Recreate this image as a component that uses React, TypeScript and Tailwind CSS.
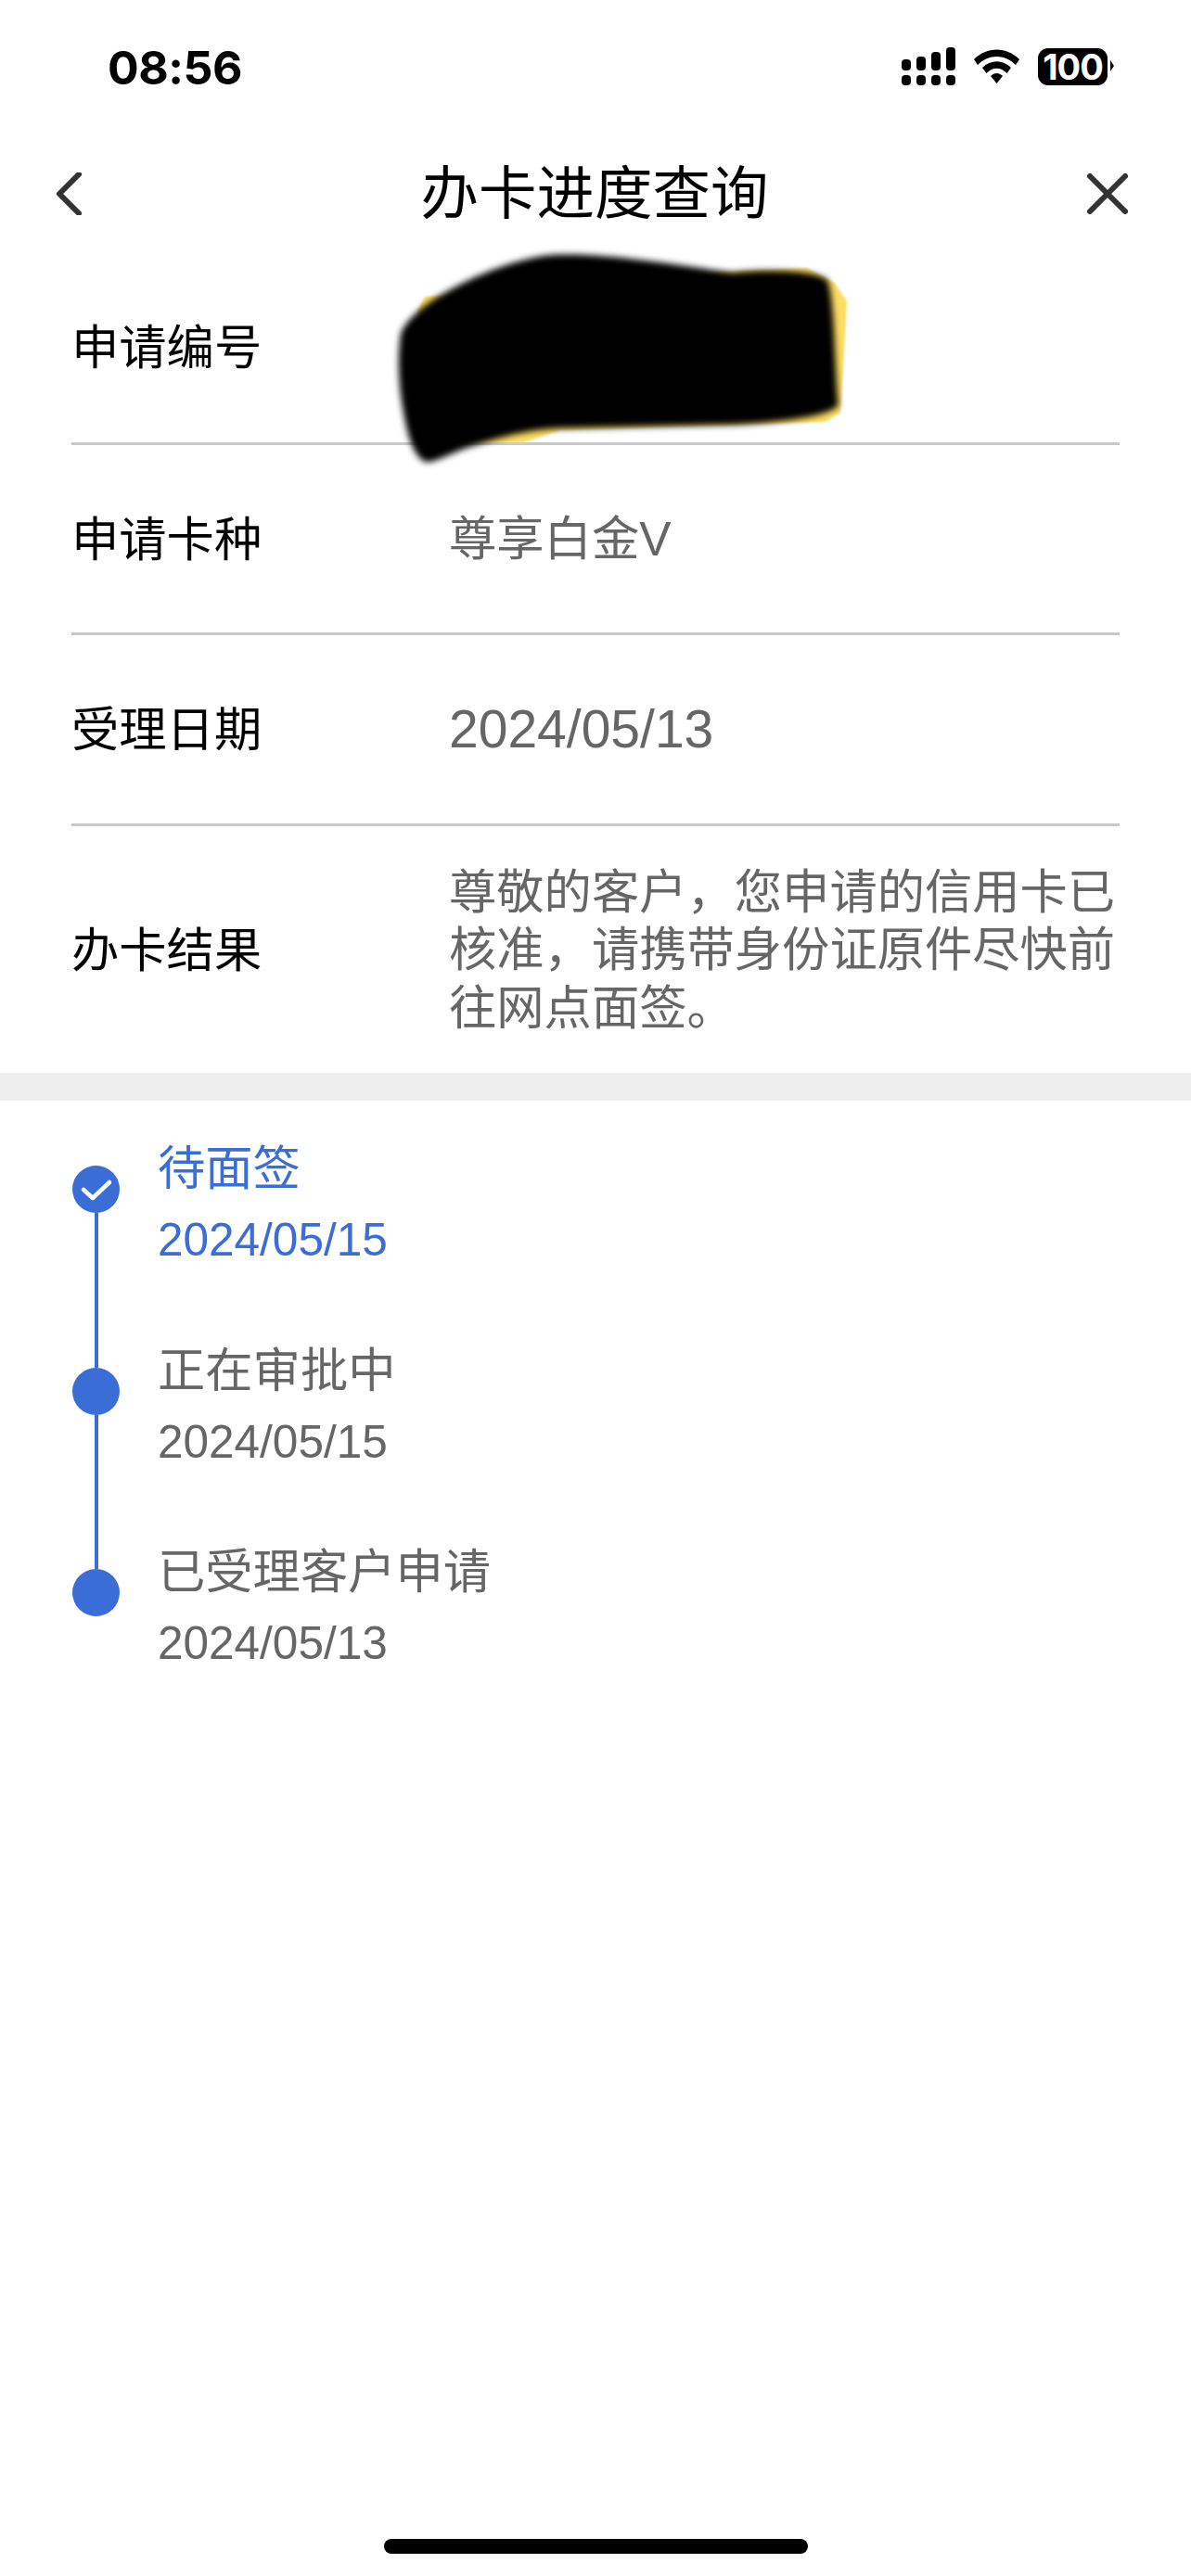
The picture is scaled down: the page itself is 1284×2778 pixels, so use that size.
const FONT = "font-['Liberation_Sans','Noto_Sans_CJK_SC',sans-serif]";

function StatusIcons() {
  return (
    <div className="flex items-center">
      <svg width="230" height="42" viewBox="0 0 230 42" className="block">
        <g fill="#000">
          <rect x="0" y="13" width="10" height="12" rx="4" />
          <rect x="16" y="10" width="10" height="15" rx="4" />
          <rect x="32" y="5" width="10" height="20" rx="4" />
          <rect x="48" y="0" width="10" height="25" rx="4" />
          <rect x="0" y="30" width="10" height="11" rx="4" />
          <rect x="16" y="30" width="10" height="11" rx="4" />
          <rect x="32" y="30" width="10" height="11" rx="4" />
          <rect x="48" y="30" width="10" height="11" rx="4" />
          <path d="M78 13 C92 -1 113 -1 127 13 L123 19 C111 7 94 7 82 19 Z" />
          <path d="M87 22 C96 13 109 13 118 22 L113.5 28 C107 21 98 21 91.500 28 Z" />
          <path d="M96 31 C100 27 105 27 109 31 L102.500 39 Z" />
          <path d="M225 14 L229 20 L225 26 Z" />
        </g>
      </svg>
    </div>
  );
}

function InfoRow({ label, value, h }: { label: string; value: React.ReactNode; h: string }) {
  return (
    <div className={`flex items-center mx-[77px] pt-[3px] ${h}`}>
      <div className="w-[407px] text-[51.300px] leading-[62px] text-black">{label}</div>
      <div className="flex-1 text-[51.300px] leading-[62.500px] text-[#666]">{value}</div>
    </div>
  );
}

function Step({ title, date, active, check, first, last, h }: { title: string; date: string; active?: boolean; check?: boolean; first?: boolean; last?: boolean; h: string }) {
  return (
    <div className={`flex ${h}`}>
      <div className="w-[51px] ml-[78px] flex flex-col items-center">
        <div className={first ? "h-[35px]" : "h-[35px] w-[4px] bg-[#3a6ed6]"} />
        <div className="w-[51px] h-[51px] rounded-full bg-[#3a6ed6] flex items-center justify-center shrink-0">
          {check && (
            <svg width="36" height="28" viewBox="0 0 36 28">
              <path d="M4 14 L14 23 L32 6" fill="none" stroke="#fff" strokeWidth="4.500" strokeLinecap="round" strokeLinejoin="round" />
            </svg>
          )}
        </div>
        {!last && <div className="flex-1 w-[4px] bg-[#3a6ed6]" />}
      </div>
      <div className={`ml-[41px] pt-[4px] ${active ? "text-[#3a6ed6]" : "text-[#666]"}`}>
        <div className="text-[51.300px] leading-[70px]">{title}</div>
        <div className="mt-[11px] text-[49.500px] leading-[60px]">{date}</div>
      </div>
    </div>
  );
}

export default function App() {
  return (
    <div className={`relative w-[1284px] h-[2778px] bg-white overflow-hidden flex flex-col ${FONT}`}>
      <div className="h-[144px] flex items-center justify-between pl-[116px] pr-[82px]">
        <span className="font-['Inter',sans-serif] font-bold text-[50px] tracking-[-0.500px] leading-none text-black mt-[2px]">08:56</span>
        <div className="relative flex items-center">
          <StatusIcons />
          <div className="absolute left-[147px] top-[1px] w-[75px] h-[40px] rounded-[11px] bg-black text-white font-['Inter',sans-serif] font-bold text-[38px] tracking-[-1px] leading-[40px] text-center">100</div>
        </div>
      </div>

      <div className="h-[128px] pt-[2px] flex items-center justify-between pl-[60px] pr-[68px]">
        <div className="w-[50px]">
          <svg width="28" height="46" viewBox="0 0 28 46">
            <path d="M25 2 L4 23 L25 44" fill="none" stroke="#333" strokeWidth="6" strokeLinecap="round" strokeLinejoin="round" />
          </svg>
        </div>
        <div className="text-[62.500px] leading-[80px] text-black">办卡进度查询</div>
        <svg width="44" height="44" viewBox="0 0 44 44">
          <path d="M3 3 L41 41 M41 3 L3 41" fill="none" stroke="#333" strokeWidth="6" strokeLinecap="round" />
        </svg>
      </div>

      <InfoRow label="申请编号" value="" h="h-[205px]" />
      <div className="mx-[77px] h-[3px] bg-[#c8c8c8]" />
      <InfoRow label="申请卡种" value="尊享白金V" h="h-[202px]" />
      <div className="mx-[77px] h-[3px] bg-[#c8c8c8]" />
      <InfoRow label="受理日期" value={<span className="text-[57px]">2024/05/13</span>} h="h-[203px]" />
      <div className="mx-[77px] h-[3px] bg-[#c8c8c8]" />
      <InfoRow
        label="办卡结果"
        value={<>尊敬的客户，您申请的信用卡已<br />核准，请携带身份证原件尽快前<br />往网点面签。</>}
        h="h-[266px]"
      />
      <div className="h-[30px] bg-[#eeeeee]" />

      <div className="pt-[35px]">
        <Step first check active title="待面签" date="2024/05/15" h="h-[218px]" />
        <Step title="正在审批中" date="2024/05/15" h="h-[217px]" />
        <Step last title="已受理客户申请" date="2024/05/13" h="h-[217px]" />
      </div>

      <div className="mt-auto mb-[24px] mx-auto w-[457px] h-[16px] rounded-full bg-black" />

      <svg className="absolute left-0 top-0 pointer-events-none" width="1284" height="560" viewBox="0 0 1284 560">
        <defs>
          <filter id="b1" x="-10%" y="-10%" width="120%" height="120%"><feGaussianBlur stdDeviation="3.500" /></filter>
          <filter id="b2" x="-10%" y="-10%" width="120%" height="120%"><feGaussianBlur stdDeviation="1" /></filter>
        </defs>
        <path filter="url(#b2)" fill="#ffdc64" d="M450 335 L458 320 L800 292 L870 289 L900 305 L913 325 L909 400 L906 445 L890 455 L604 464 L565 477 L500 477 Z" />
        <path filter="url(#b1)" fill="#000" d="M432 360 C445 325 530 285 585 276 C640 270 720 285 790 294 C830 290 880 292 892 302 C900 320 900 400 904 437 C895 448 850 455 790 458 L600 462 C560 464 530 475 500 484 C480 492 465 500 458 498 C445 490 440 470 436 450 C430 420 428 390 432 360 Z" />
      </svg>
    </div>
  );
}
